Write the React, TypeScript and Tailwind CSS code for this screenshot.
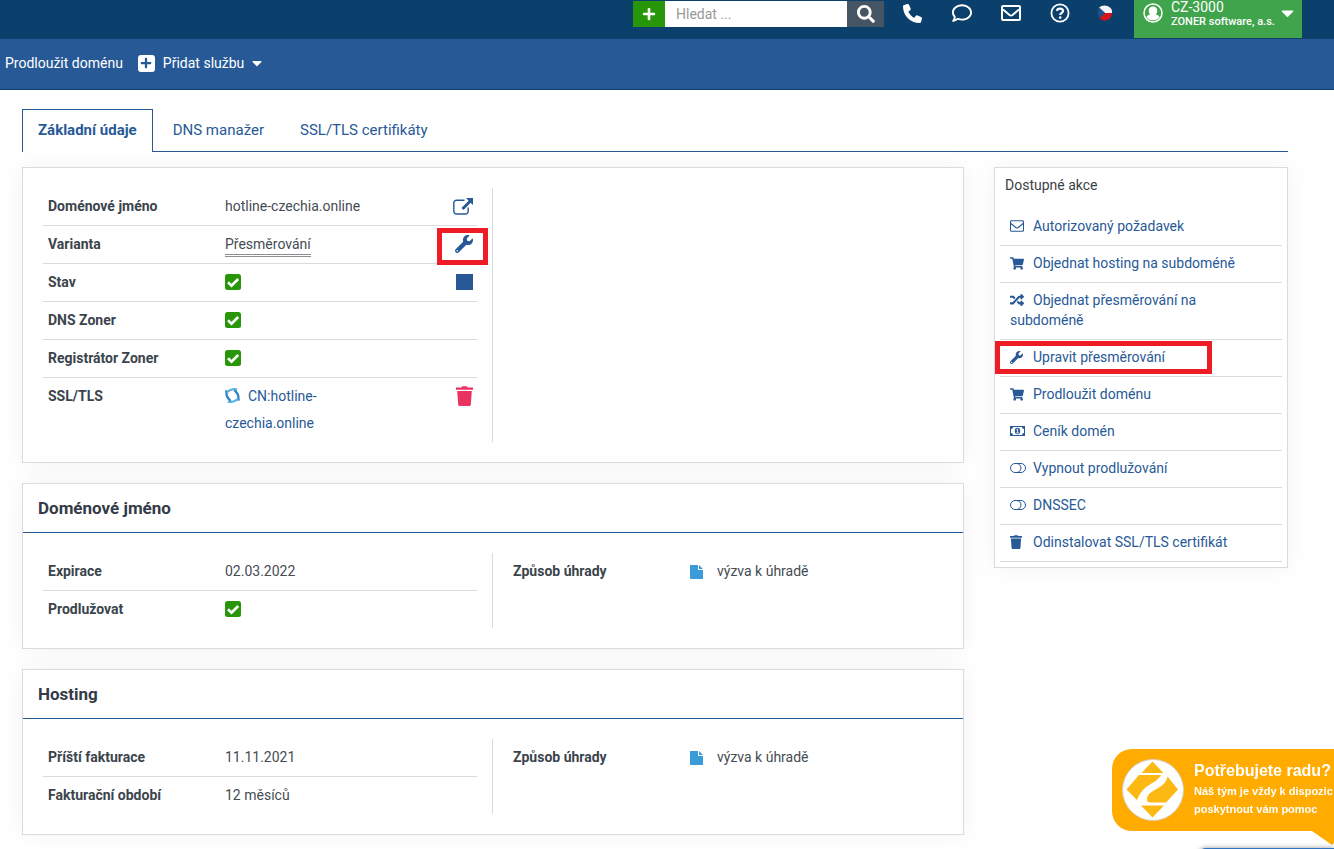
import type { ReactNode } from 'react'
import { FaPlus, FaSearch, FaWrench, FaShoppingCart, FaRandom, FaCaretDown } from 'react-icons/fa'
import { FaPhone, FaRegComment } from 'react-icons/fa6'

type IconProps = { className?: string }

function EnvelopeIcon({ className }: IconProps) {
  return (
    <svg viewBox="0 0 20 16" className={className} fill="none" stroke="currentColor" aria-hidden="true">
      <rect x="1" y="1" width="18" height="14" rx="1" strokeWidth="2" />
      <path d="M2 4.500 8.500 10q1.500 1 3 0L18 4.500" strokeWidth="2" />
    </svg>
  )
}

function EnvelopeThinIcon({ className }: IconProps) {
  return (
    <svg viewBox="0 0 14 12" className={className} fill="none" stroke="currentColor" aria-hidden="true">
      <rect x=".5" y=".8" width="13" height="10.400" rx="1" strokeWidth="1.100" />
      <path d="M.8 3.500 5.800 7.500q1.200.8 2.400 0L13.200 3.500" strokeWidth="1.100" />
    </svg>
  )
}

function HelpIcon({ className }: IconProps) {
  return (
    <svg viewBox="0 0 20 20" className={className} fill="none" stroke="currentColor" aria-hidden="true">
      <circle cx="10" cy="10" r="8.600" strokeWidth="1.800" />
      <path d="M7 7.800C7.300 4.800 13 4.800 13 7.900c0 2-2.800 2-2.800 4.200" strokeWidth="2.200" />
      <circle cx="10.200" cy="14.600" r="1.300" fill="currentColor" stroke="none" />
    </svg>
  )
}

function UserIcon({ className }: IconProps) {
  return (
    <svg viewBox="0 0 20 20" className={className} aria-hidden="true">
      <circle cx="10" cy="10" r="9" fill="none" stroke="currentColor" strokeWidth="1.500" />
      <path
        fill="currentColor"
        d="M10 3.600c2.700 0 4.300 1.700 4.300 4.200 0 1.500-.6 2.800-1.500 3.600 2 .3 3.300 1.200 3.800 2.600A8 8 0 0 1 10 17.300 8 8 0 0 1 3.400 14c.5-1.400 1.800-2.300 3.800-2.600-.9-.8-1.500-2.100-1.500-3.600 0-2.500 1.600-4.200 4.300-4.200z"
      />
    </svg>
  )
}

function FlagIcon({ className }: IconProps) {
  return (
    <svg viewBox="0 0 16 16" className={className} aria-hidden="true">
      <path d="M2 2.500C5-.2 10-.3 13 2.500c1.800 1.500 2.300 3.500 2 5.500H8z" fill="#f4f5f7" />
      <path d="M15 8c0 4-3 7.500-7.500 7.500-2.500 0-4-1-5-2.500L8 8z" fill="#d7141a" />
      <path d="M2 2.500C.5 5 .5 10 2.500 13L8 8z" fill="#21518c" />
    </svg>
  )
}

function ExternalIcon({ className }: IconProps) {
  return (
    <svg viewBox="0 0 20 17" className={className} aria-hidden="true">
      <path
        d="M11.500 2.200H3.600A2.800 2.800 0 0 0 .8 5v8.200A2.800 2.800 0 0 0 3.600 16h8.800a2.800 2.800 0 0 0 2.800-2.800V9.500"
        fill="none"
        stroke="currentColor"
        strokeWidth="1.400"
      />
      <path d="M13 0h7v7l-2.300-2.300-7.200 7.200-2-2 7.100-7.200z" fill="currentColor" />
    </svg>
  )
}

function TrashIcon({ className }: IconProps) {
  return (
    <svg viewBox="0 0 17 20" className={className} fill="currentColor" aria-hidden="true">
      <path d="M5.500 1.500 6.200.3h4.600l.7 1.200H17v2.300H0V1.500zM1.200 5h14.600l-1 13.500c0 .8-.7 1.500-1.500 1.500H3.700c-.8 0-1.500-.7-1.500-1.500z" />
    </svg>
  )
}

function FileIcon({ className }: IconProps) {
  return (
    <svg viewBox="0 0 13 14" className={className} fill="#3a9bd9" aria-hidden="true">
      <path d="M0 0h8v5h5v9H.8A.8.8 0 0 1 0 13.200zM9 0l4 4H9z" />
    </svg>
  )
}

function MoneyIcon({ className }: IconProps) {
  return (
    <svg viewBox="0 0 15 10" className={className} aria-hidden="true">
      <path d="M0 0h15v10H0z" fill="currentColor" />
      <path d="M3 1h9a2 2 0 0 0 2 2v4a2 2 0 0 0-2 2H3a2 2 0 0 0-2-2V3a2 2 0 0 0 2-2z" fill="#fff" />
      <ellipse cx="7.500" cy="5" rx="2.700" ry="3.200" fill="currentColor" />
      <path d="M6.500 3.700 7.600 3v3.800M6.300 6.900h2.500" stroke="#fff" strokeWidth=".9" fill="none" />
    </svg>
  )
}

function ToggleIcon({ className }: IconProps) {
  return (
    <svg viewBox="0 0 16 10" className={className} fill="none" stroke="currentColor" aria-hidden="true">
      <rect x=".5" y=".5" width="15" height="9" rx="4.500" />
      <path d="M6.500.5a4.500 4.500 0 0 1 0 9" />
    </svg>
  )
}

function CertIcon({ className }: IconProps) {
  return (
    <svg viewBox="0 0 16 16" className={className} fill="none" aria-hidden="true">
      <path d="M1.500 2.500Q1.200 8 3 10.500L6 14M14.300 13.500Q14.800 8 13 5.500L10 2" stroke="#2f86c6" strokeWidth="2.500" />
      <path d="M2.500 4 7 1.500q3-.8 6 0M3 14.300q3 1 6 .2l4.500-2.500" stroke="#58b0e0" strokeWidth="2.200" />
    </svg>
  )
}

function ZonerLogo({ className }: IconProps) {
  return (
    <svg viewBox="0 0 62 62" className={className} aria-hidden="true">
      <circle cx="31" cy="31" r="30.500" fill="#fff" stroke="#d6cfc0" />
      <g fill="#fdb913">
        <path d="M30.500 2.500 41.500 14h-22z" />
        <path d="M30.500 58.500 19 46.500h23z" />
        <path d="M17 16h22c-3 6-10 8-16 13-4 3.500-6 7-8 12L4.500 30.500z" />
        <path d="M45.500 17.500 56 30.500 44 43.500H28c-3 0-3.500-3-2.500-6 4-8 18-8 20-20z" />
      </g>
    </svg>
  )
}

function Check() {
  return (
    <svg viewBox="0 0 16 16" className="inline-block w-4 h-4 -mt-[3px] align-middle" role="img" aria-label="Ano">
      <rect width="16" height="16" rx="2.500" fill="#289609" />
      <path d="m3 8.200 3.500 3.400L13.200 5" fill="none" stroke="#fff" strokeWidth="2.600" />
    </svg>
  )
}

type Row = { label: string; value: ReactNode; action?: ReactNode }

function DataTable({ rows }: { rows: Row[] }) {
  return (
    <table className="w-full table-fixed border-collapse">
      <tbody>
        {rows.map((row) => (
          <tr key={row.label} className="border-b border-[#dadbdc] last:border-b-0 align-top">
            <th scope="row" className="w-[177px] px-[5px] py-[5px] text-left font-bold text-[#3b444c]">{row.label}</th>
            <td className="px-[5px] py-[5px]">{row.value}</td>
            {row.action !== undefined && (
              <td className="w-24 px-1 h-[37px]">
                <div className="flex items-center justify-end h-9">{row.action}</div>
              </td>
            )}
          </tr>
        ))}
      </tbody>
    </table>
  )
}

function Card({ title, left, right }: { title?: string; left: Row[]; right?: Row[] }) {
  return (
    <section className="border border-[#dadbdc] bg-white shadow-[0_0_25px_rgba(0,0,0,0.05)]">
      {title && (
        <h2 className="h-[49px] px-[15px] border-b border-[#285997] text-[17px] leading-[48px] font-bold text-[#343b47]">{title}</h2>
      )}
      <div className="grid grid-cols-2 p-5 leading-[27px]">
        <div className="pr-[15px] border-r border-[#dadbdc]">
          <DataTable rows={left} />
        </div>
        <div className="pl-[15px]">{right && <DataTable rows={right} />}</div>
      </div>
    </section>
  )
}

const domainRows: Row[] = [
  {
    label: 'Doménové jméno',
    value: 'hotline-czechia.online',
    action: <a href="#web" aria-label="Otevřít web"><ExternalIcon className="w-5 h-[17px] text-[#285997]" /></a>,
  },
  {
    label: 'Varianta',
    value: <span className="inline-block leading-5 border-b-3 border-double border-[#8b8f93]">Přesměrování</span>,
    action: (
      <button type="button" aria-label="Upravit přesměrování" className="relative">
        <FaWrench className="w-[18px] h-[18px] text-[#285997]" />
        <span className="absolute -left-[18px] -top-[7px] w-[51px] h-[37px] border-5 border-[#ee1c25]" />
      </button>
    ),
  },
  {
    label: 'Stav',
    value: <Check />,
    action: <button type="button" aria-label="Zastavit" className="w-[17px] h-4 bg-[#285997]" />,
  },
  { label: 'DNS Zoner', value: <Check />, action: null },
  { label: 'Registrátor Zoner', value: <Check />, action: null },
  {
    label: 'SSL/TLS',
    value: (
      <a href="#cert" className="text-[#285997]">
        <CertIcon className="inline-block w-[15px] h-[15px] mr-2 -mt-1 align-middle" />
        CN:hotline-<wbr />czechia.online
      </a>
    ),
    action: <button type="button" aria-label="Odstranit certifikát"><TrashIcon className="w-[17px] h-5 text-[#e8325f]" /></button>,
  },
]

const paymentRows: Row[] = [
  {
    label: 'Způsob úhrady',
    value: <span className="flex items-center"><FileIcon className="w-[13px] h-[14px] mr-[14px]" />výzva k úhradě</span>,
  },
]

const actions = [
  { icon: <EnvelopeThinIcon className="w-[14px] h-3" />, label: 'Autorizovaný požadavek' },
  { icon: <FaShoppingCart className="w-[14px] h-[13px]" />, label: 'Objednat hosting na subdoméně' },
  { icon: <FaRandom className="w-[14px] h-[14px]" />, label: 'Objednat přesměrování na subdoméně' },
  { icon: <FaWrench className="w-[13px] h-[13px]" />, label: 'Upravit přesměrování', marked: true },
  { icon: <FaShoppingCart className="w-[14px] h-[13px]" />, label: 'Prodloužit doménu' },
  { icon: <MoneyIcon className="w-[15px] h-[10px]" />, label: 'Ceník domén' },
  { icon: <ToggleIcon className="w-4 h-[10px]" />, label: 'Vypnout prodlužování' },
  { icon: <ToggleIcon className="w-4 h-[10px]" />, label: 'DNSSEC' },
  { icon: <TrashIcon className="w-3 h-[14px]" />, label: 'Odinstalovat SSL/TLS certifikát' },
]

function TopBar() {
  return (
    <header className="flex items-start justify-end h-[39px] pr-8 bg-[#0a406b] text-white">
      <form className="flex h-[26px] mt-px" onSubmit={(e) => e.preventDefault()}>
        <button type="button" aria-label="Přidat" className="flex items-center justify-center w-8 bg-[#289609]">
          <FaPlus className="w-[14px] h-[14px]" />
        </button>
        <input
          type="search"
          aria-label="Hledat"
          placeholder="Hledat ..."
          className="w-[182px] px-[11px] bg-white text-sm text-[#3b444c] placeholder:text-[#999] outline-none"
        />
        <button type="submit" aria-label="Vyhledat" className="flex items-center justify-center w-[37px] bg-[#455564]">
          <FaSearch className="w-[18px] h-[18px]" />
        </button>
      </form>
      <nav className="flex h-[26px] ml-1">
        <a href="#phone" aria-label="Telefon" className="flex items-center justify-center w-[49px]"><FaPhone className="w-[19px] h-[19px]" /></a>
        <a href="#chat" aria-label="Chat" className="flex items-center justify-center w-[49px]"><FaRegComment className="w-5 h-5" /></a>
        <a href="#mail" aria-label="Zprávy" className="flex items-center justify-center w-[49px]"><EnvelopeIcon className="w-5 h-4" /></a>
        <a href="#help" aria-label="Nápověda" className="flex items-center justify-center w-[49px]"><HelpIcon className="w-5 h-5" /></a>
        <a href="#lang" aria-label="Čeština" className="flex items-center justify-center w-[42px]"><FlagIcon className="w-4 h-4" /></a>
      </nav>
      <button type="button" className="flex items-start w-[168px] h-[38px] ml-2 pl-[9px] pr-2 bg-[#40a44c] text-left">
        <UserIcon className="w-5 h-5 mt-[3px] mr-2" />
        <span className="flex-1 whitespace-nowrap">
          <span className="block text-sm leading-[14px]">CZ-3000</span>
          <span className="block text-[11px] leading-4 font-medium">ZONER software, a.s.</span>
        </span>
        <FaCaretDown className="w-[13px] h-5 mt-[3px]" />
      </button>
    </header>
  )
}

function ChatBubble() {
  return (
    <aside className="fixed right-0 bottom-0 w-[222px] h-[100px] overflow-hidden text-white font-['Liberation_Sans',sans-serif] font-bold">
      <div className="flex h-[82px] pl-[10px] rounded-l-[20px] bg-[#ffab00]">
        <ZonerLogo className="w-[62px] h-[62px] mt-[10px] mr-[10px] shrink-0" />
        <div className="pt-3 whitespace-nowrap">
          <p className="text-base leading-5">Potřebujete radu?</p>
          <p className="text-[11px] leading-[18px] mt-px">Náš tým je vždy k dispozic</p>
          <p className="text-[11px] leading-[18px]">poskytnout vám pomoc</p>
        </div>
      </div>
      <svg viewBox="0 0 22 15" className="w-[22px] h-[15px] ml-auto" aria-hidden="true">
        <path d="M0 0h22v12l-2 2z" fill="#ffab00" />
      </svg>
      <div className="absolute left-[86px] right-0 top-[99px] h-2 rounded-tl-lg bg-[#2f75c0] shadow-[0_0_5px_rgba(0,0,0,0.4)]" />
    </aside>
  )
}

export default function App() {
  return (
    <div className="min-h-screen overflow-x-hidden bg-white font-[Roboto,sans-serif] text-sm text-[#454c53]">
      <TopBar />
      <nav className="flex items-center h-[51px] px-[5px] pb-[2px] bg-[#285997] border-b border-[#0a406b] text-white">
        <a href="#renew" className="mr-[15px]">Prodloužit doménu</a>
        <button type="button" className="flex items-center">
          <span className="flex items-center justify-center w-[17px] h-[17px] mr-2 rounded-[3px] bg-white">
            <FaPlus className="w-3 h-3 text-[#285997]" />
          </span>
          Přidat službu
          <FaCaretDown className="w-[10px] h-4 ml-2" />
        </button>
      </nav>

      <main className="pl-[22px] pr-[46px] pt-[19px] pb-[14px]">
        <div role="tablist" className="flex gap-1 h-[43px] border-b border-[#285997] text-[15px] text-[#285997]">
          <button type="button" role="tab" aria-selected="true" className="h-[43px] px-[15px] border border-b-0 border-[#285997] bg-white font-bold">
            Základní údaje
          </button>
          <button type="button" role="tab" aria-selected="false" className="h-[43px] px-4">DNS manažer</button>
          <button type="button" role="tab" aria-selected="false" className="h-[43px] px-4">SSL/TLS certifikáty</button>
        </div>

        <div className="flex items-start gap-[30px] mt-[15px]">
          <div className="flex flex-col flex-1 gap-5">
            <Card left={domainRows} />
            <Card
              title="Doménové jméno"
              left={[{ label: 'Expirace', value: '02.03.2022' }, { label: 'Prodlužovat', value: <Check /> }]}
              right={paymentRows}
            />
            <Card
              title="Hosting"
              left={[{ label: 'Příští fakturace', value: '11.11.2021' }, { label: 'Fakturační období', value: '12 měsíců' }]}
              right={paymentRows}
            />
          </div>

          <aside className="w-[294px] px-[5px] pb-[5px] border border-[#dadbdc] bg-white shadow-[0_0_25px_rgba(0,0,0,0.05)]">
            <h2 className="h-[41px] px-[5px] pt-[7px] leading-5 text-[#3b3f45]">Dostupné akce</h2>
            <ul>
              {actions.map((action) => (
                <li key={action.label} className="relative border-b border-[#dadbdc]">
                  <a href="#action" className="block px-[10px] pt-[7px] pb-[9px] leading-5 text-[#285997]">
                    <span className="inline-flex items-center w-[23px] h-5 align-top">{action.icon}</span>
                    {action.label}
                  </a>
                  {action.marked && <span className="absolute -left-[5px] top-px w-[217px] h-[33px] border-5 border-[#ee1c25]" />}
                </li>
              ))}
            </ul>
          </aside>
        </div>
      </main>
      <ChatBubble />
    </div>
  )
}
